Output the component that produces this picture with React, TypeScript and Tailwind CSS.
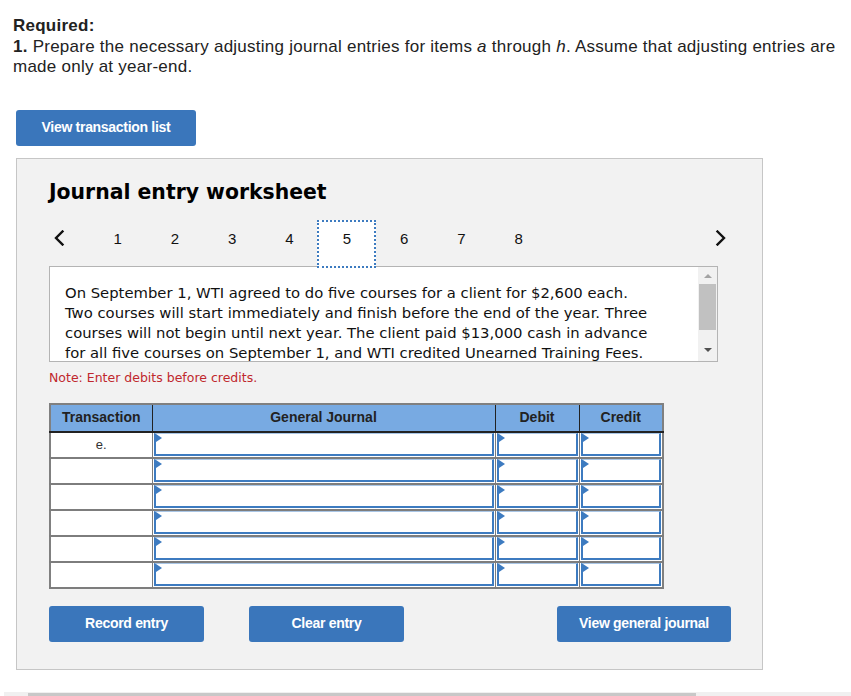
import { Fragment } from 'react'

const navItems = [1, 2, 3, 4, 5, 6, 7, 8]
const rows = ['e.', '', '', '', '', '']

const Chevron = ({ dir }: { dir: 'left' | 'right' }) => (
  <svg width="12" height="16" viewBox="0 0 12 16" className="block">
    <polyline
      points={dir === 'left' ? '9.5,1.5 3,8 9.5,14.5' : '2.5,1.5 9,8 2.5,14.5'}
      fill="none"
      stroke="#111"
      strokeWidth="2.4"
      strokeLinecap="square"
    />
  </svg>
)

// input box with the little blue marker in its top-left corner
const EntryInput = () => (
  <div className="relative h-[23px] mx-[1px] bg-white border-2 border-[#3d7bc0] border-t-[#a9c6e6] border-t-[1px]">
    <span className="absolute left-0 top-0 w-0 h-0 border-y-[4px] border-y-transparent border-l-[6px] border-l-[#3d7bc0]" />
  </div>
)

const BlueButton = ({ label, width }: { label: string; width: string }) => (
  <button
    className={`${width} h-[36px] rounded-[3px] bg-[#3a76bb] text-white text-[14px] font-bold tracking-[-0.3px] font-['Liberation_Sans',Arial,sans-serif]`}
  >
    {label}
  </button>
)

export default function App() {
  return (
    <div className="w-[851px] h-[696px] bg-white overflow-hidden font-['Liberation_Sans',Arial,sans-serif] text-[#111]">
      {/* Required */}
      <div className="px-[13px] pt-[16px] text-[17px] tracking-[0.25px] leading-[20.5px] text-[#222] whitespace-nowrap">
        <div className="font-bold">Required:</div>
        <div>
          <span className="font-bold">1.</span> Prepare the necessary adjusting journal entries for items <i>a</i> through{' '}
          <i>h</i>. Assume that adjusting entries are
        </div>
        <div>made only at year-end.</div>
      </div>

      <div className="ml-[16px] mt-[32px]">
        <BlueButton label="View transaction list" width="w-[180px]" />
      </div>

      {/* Worksheet panel */}
      <div className="ml-[16px] mt-[12px] w-[747px] h-[512px] border border-[#c6c6c6] bg-[#f2f2f2] pl-[32px] pr-[30px] pt-[21px]">
        <h2 className="font-['DejaVu_Sans',Verdana,sans-serif] font-bold text-[20.4px] leading-[24px] text-black">
          Journal entry worksheet
        </h2>

        <div className="flex mt-[16px] h-[46px] w-[669px]">
          <div className="w-[40px] pt-[10px] pl-[4px]">
            <Chevron dir="left" />
          </div>
          {navItems.map((n) =>
            n === 5 ? (
              <div
                key={n}
                className="relative z-10 w-[59px] -mx-[0.85px] h-[48px] bg-white border-2 border-dotted border-[#3d7bc0] text-center pt-[8px] text-[15px] leading-[18px]"
              >
                {n}
              </div>
            ) : (
              <div key={n} className="w-[57.3px] h-[46px] text-center pt-[10px] text-[15px] leading-[18px]">
                {n}
              </div>
            )
          )}
          <div className="ml-auto pt-[10px] mr-[-9px]">
            <Chevron dir="right" />
          </div>
        </div>

        {/* Transaction description */}
        <div className="relative flex w-[669px] h-[96px] border border-[#b4b4b4] bg-white">
          <p className="flex-1 pl-[15px] pr-[10px] pt-[16px] font-['DejaVu_Sans',Verdana,sans-serif] text-[14.8px] leading-[20px] text-[#111] overflow-hidden whitespace-nowrap">
            On September 1, WTI agreed to do five courses for a client for $2,600 each.
            <br />
            Two courses will start immediately and finish before the end of the year. Three
            <br />
            courses will not begin until next year. The client paid $13,000 cash in advance
            <br />
            for all five courses on September 1, and WTI credited Unearned Training Fees.
          </p>
          <div className="w-[19px] shrink-0 bg-[#f1f1f1] flex flex-col items-center">
            <span className="mt-[7px] w-0 h-0 border-x-[4px] border-x-transparent border-b-[4px] border-b-[#a3a3a3]" />
            <div className="mt-[6px] w-[17px] h-[46px] bg-[#c1c1c1]" />
            <span className="mt-auto mb-[9px] w-0 h-0 border-x-[4px] border-x-transparent border-t-[4px] border-t-[#505050]" />
          </div>
        </div>

        <p className="mt-[8px] font-['DejaVu_Sans',Verdana,sans-serif] text-[12.5px] leading-[16px] text-[#c0282d]">
          Note: Enter debits before credits.
        </p>

        {/* Journal table */}
        <table className="mt-[17px] border-collapse border-2 border-[#808080] text-[14px]">
          <colgroup>
            <col className="w-[102px]" />
            <col className="w-[343px]" />
            <col className="w-[84px]" />
            <col className="w-[84px]" />
          </colgroup>
          <thead>
            <tr className="h-[28px] bg-[#78aae2] font-bold text-[#222]">
              <th className="border-r border-[#222] border-b-2 border-b-[#222] font-bold">Transaction</th>
              <th className="border-r border-[#222] border-b-2 border-b-[#222] font-bold">General Journal</th>
              <th className="border-r border-[#222] border-b-2 border-b-[#222] font-bold">Debit</th>
              <th className="border-b-2 border-b-[#222] font-bold">Credit</th>
            </tr>
          </thead>
          <tbody>
            {rows.map((label, i) => (
              <tr key={i} className="h-[26px] bg-white border-b-2 border-[#7d7d7d]">
                <td className="border-r border-[#7d7d7d] text-center align-top pt-[4px] text-[13px] leading-[16px] text-[#333]">
                  {label}
                </td>
                {[0, 1, 2].map((c) => (
                  <Fragment key={c}>
                    <td className={`p-0 ${c < 2 ? 'border-r border-[#7d7d7d]' : ''}`}>
                      <EntryInput />
                    </td>
                  </Fragment>
                ))}
              </tr>
            ))}
          </tbody>
        </table>

        {/* Actions */}
        <div className="flex mt-[17px] w-[682px]">
          <BlueButton label="Record entry" width="w-[155px]" />
          <div className="ml-[45px]">
            <BlueButton label="Clear entry" width="w-[155px]" />
          </div>
          <div className="ml-auto">
            <BlueButton label="View general journal" width="w-[174px]" />
          </div>
        </div>
      </div>

      {/* horizontal scroll strip */}
      <div className="mt-[22px] ml-[4px] h-[4px] bg-[#f0f0f0] pt-[1px]">
        <div className="ml-[24px] w-[668px] h-[3px] bg-[#c8c8c8]" />
      </div>
    </div>
  )
}
